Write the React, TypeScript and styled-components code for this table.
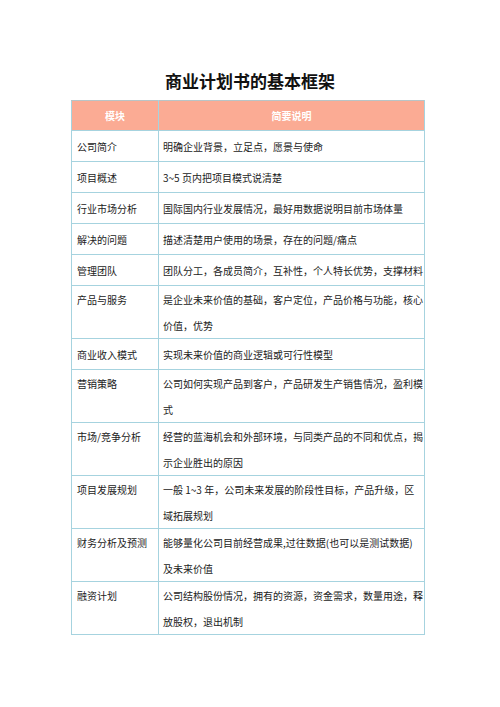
import React from "react";
import styled, { createGlobalStyle } from "styled-components";

const GlobalStyle = createGlobalStyle`
  html, body {
    margin: 0;
    padding: 0;
    background: #ffffff;
  }
  body {
    font-family: "Noto Sans CJK SC", "Noto Sans", sans-serif;
    color: #222222;
  }
`;

const Page = styled.div`
  width: 500px;
  min-height: 707px;
  box-sizing: border-box;
  padding: 69px 75px 0 71px;
  display: flex;
  flex-direction: column;
`;

const Title = styled.h1`
  margin: 0 0 7px 0;
  font-size: 17px;
  line-height: 24px;
  font-weight: 700;
  text-align: center;
  color: #111111;
  padding-left: 4px;
`;

const Table = styled.table`
  width: 354px;
  border-collapse: collapse;
  table-layout: fixed;
  font-size: 10px;
`;

const HeadCell = styled.th<{ $w?: number }>`
  width: ${(p) => (p.$w ? `${p.$w}px` : "auto")};
  height: 30px;
  box-sizing: border-box;
  padding: 0;
  background: #fbab94;
  color: #ffffff;
  font-weight: 700;
  font-size: 10px;
  text-align: center;
  vertical-align: middle;
  border: 1px solid #a6d3df;
  border-top-color: #b9c4c6;
`;

const Cell = styled.td<{ $first?: boolean; $top?: boolean }>`
  height: 31px;
  box-sizing: border-box;
  padding: 1px 2px 0 ${(p) => (p.$first ? 5 : 4)}px;
  line-height: 25.5px;
  vertical-align: ${(p) => (p.$top ? "top" : "middle")};
  border: 1px solid #a6d3df;
  color: #222222;
  white-space: nowrap;
  overflow: hidden;
`;

const rows: { name: string; lines: string[] }[] = [
  { name: "公司简介", lines: ["明确企业背景，立足点，愿景与使命"] },
  { name: "项目概述", lines: ["3~5 页内把项目模式说清楚"] },
  { name: "行业市场分析", lines: ["国际国内行业发展情况，最好用数据说明目前市场体量"] },
  { name: "解决的问题", lines: ["描述清楚用户使用的场景，存在的问题/痛点"] },
  { name: "管理团队", lines: ["团队分工，各成员简介，互补性，个人特长优势，支撑材料"] },
  { name: "产品与服务", lines: ["是企业未来价值的基础，客户定位，产品价格与功能，核心", "价值，优势"] },
  { name: "商业收入模式", lines: ["实现未来价值的商业逻辑或可行性模型"] },
  { name: "营销策略", lines: ["公司如何实现产品到客户，产品研发生产销售情况，盈利模", "式"] },
  { name: "市场/竞争分析", lines: ["经营的蓝海机会和外部环境，与同类产品的不同和优点，揭", "示企业胜出的原因"] },
  { name: "项目发展规划", lines: ["一般 1~3 年，公司未来发展的阶段性目标，产品升级，区", "域拓展规划"] },
  { name: "财务分析及预测", lines: ["能够量化公司目前经营成果,过往数据(也可以是测试数据)", "及未来价值"] },
  { name: "融资计划", lines: ["公司结构股份情况，拥有的资源，资金需求，数量用途，释", "放股权，退出机制"] },
];

export default function App() {
  return (
    <>
      <GlobalStyle />
      <Page>
        <Title>商业计划书的基本框架</Title>
        <Table>
          <thead>
            <tr>
              <HeadCell $w={87}>模块</HeadCell>
              <HeadCell>简要说明</HeadCell>
            </tr>
          </thead>
          <tbody>
            {rows.map((r) => (
              <tr key={r.name}>
                <Cell $first $top={r.lines.length > 1}>{r.name}</Cell>
                <Cell $top={r.lines.length > 1}>
                  {r.lines.map((l, i) => (
                    <React.Fragment key={i}>
                      {i > 0 && <br />}
                      {l}
                    </React.Fragment>
                  ))}
                </Cell>
              </tr>
            ))}
          </tbody>
        </Table>
      </Page>
    </>
  );
}
